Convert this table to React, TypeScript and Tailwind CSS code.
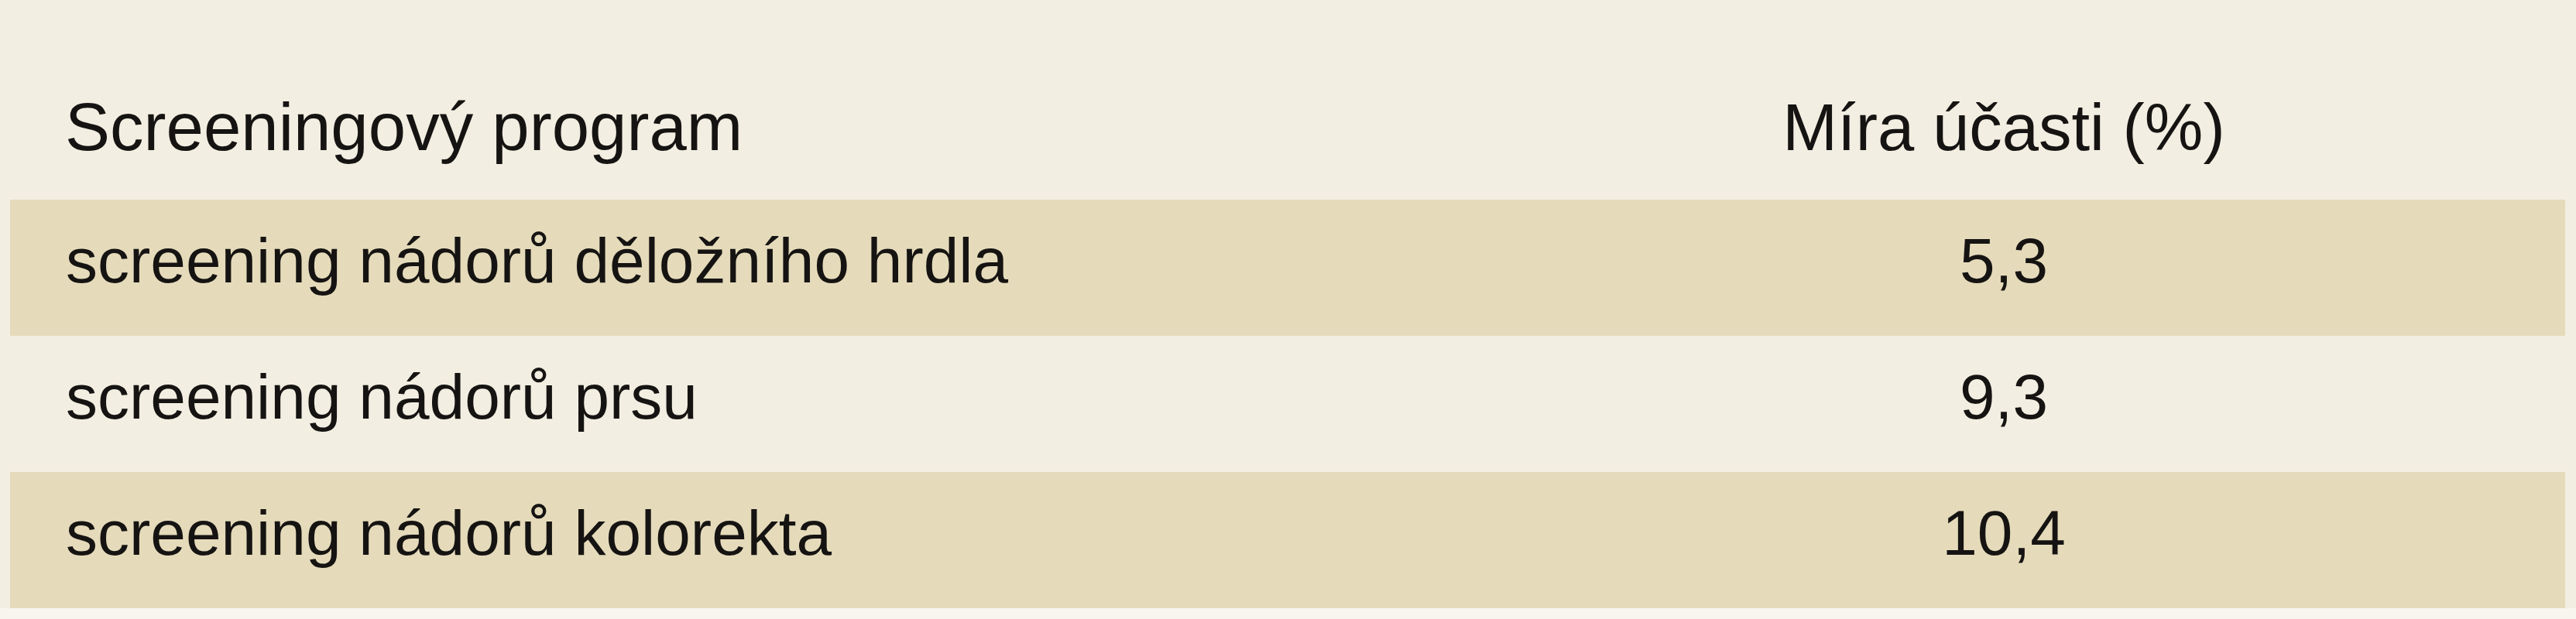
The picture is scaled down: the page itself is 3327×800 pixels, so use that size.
const rows = [
  { name: 'screening nádorů děložního hrdla', value: '5,3', tone: 'tan' },
  { name: 'screening nádorů prsu', value: '9,3', tone: 'light' },
  { name: 'screening nádorů kolorekta', value: '10,4', tone: 'tan' },
];

export default function App() {
  return (
    <div
      className="w-[3327px] h-[800px] bg-[#F3EEE2] text-[#161412] overflow-hidden"
      style={{ fontFamily: '"Liberation Sans", Arial, sans-serif' }}
    >
      <div className="ml-[13px] w-[3300px]">
        {/* hlavička tabulky */}
        <div className="grid grid-cols-[1850px_1fr] items-baseline h-[258px] pt-[120px] leading-none">
          <div className="pl-[71px] text-[87px]">Screeningový program</div>
          <div className="text-center text-[85px]">Míra účasti (%)</div>
        </div>

        {/* řádky */}
        {rows.map((row) => (
          <div
            key={row.name}
            className={`grid grid-cols-[1850px_1fr] h-[176px] pt-[38px] text-[82px] leading-none ${
              row.tone === 'tan' ? 'bg-[#E5DBBB]' : 'bg-[#F3EEE2]'
            }`}
          >
            <div className="pl-[72px]">{row.name}</div>
            <div className="text-center">{row.value}</div>
          </div>
        ))}
      </div>
      <div className="h-[14px] bg-[#F8F5EE]" />
    </div>
  );
}
